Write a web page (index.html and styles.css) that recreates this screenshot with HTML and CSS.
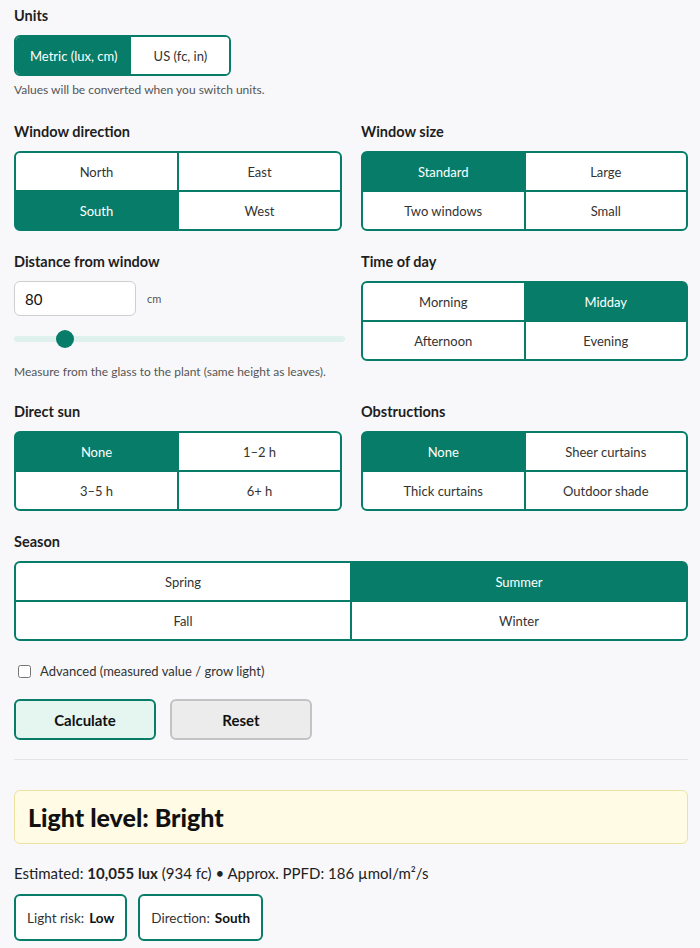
FILE: index.html
```html
<!DOCTYPE html>
<html>
<head>
  <meta charset="UTF-8">
  <title>Window Light Calculator</title>
  <link rel="stylesheet" href="styles.css">
</head>
<body>
  <div class="app">
    <div class="units">
      <div class="label">Units</div>
      <div class="seg">
        <button class="opt active">Metric (lux, cm)</button>
        <button class="opt">US (fc, in)</button>
      </div>
      <div class="hint">Values will be converted when you switch units.</div>
    </div>

    <div class="row">
      <div class="field">
        <div class="label">Window direction</div>
        <div class="grid">
          <button class="opt">North</button>
          <button class="opt">East</button>
          <button class="opt active">South</button>
          <button class="opt">West</button>
        </div>
      </div>
      <div class="field">
        <div class="label">Window size</div>
        <div class="grid">
          <button class="opt active">Standard</button>
          <button class="opt">Large</button>
          <button class="opt">Two windows</button>
          <button class="opt">Small</button>
        </div>
      </div>
    </div>

    <div class="row row-distance">
      <div class="field">
        <div class="label">Distance from window</div>
        <div class="distance">
          <input type="text" class="num" value="80">
          <span class="unit">cm</span>
        </div>
        <input type="range" class="slider" min="0" max="600" value="80">
        <div class="hint">Measure from the glass to the plant (same height as leaves).</div>
      </div>
      <div class="field">
        <div class="label">Time of day</div>
        <div class="grid">
          <button class="opt">Morning</button>
          <button class="opt active">Midday</button>
          <button class="opt">Afternoon</button>
          <button class="opt">Evening</button>
        </div>
      </div>
    </div>

    <div class="row">
      <div class="field">
        <div class="label">Direct sun</div>
        <div class="grid">
          <button class="opt active">None</button>
          <button class="opt">1–2 h</button>
          <button class="opt">3–5 h</button>
          <button class="opt">6+ h</button>
        </div>
      </div>
      <div class="field">
        <div class="label">Obstructions</div>
        <div class="grid">
          <button class="opt active">None</button>
          <button class="opt">Sheer curtains</button>
          <button class="opt">Thick curtains</button>
          <button class="opt">Outdoor shade</button>
        </div>
      </div>
    </div>

    <div class="field season">
      <div class="label">Season</div>
      <div class="grid">
        <button class="opt">Spring</button>
        <button class="opt active">Summer</button>
        <button class="opt">Fall</button>
        <button class="opt">Winter</button>
      </div>
    </div>

    <label class="check">
      <input type="checkbox">
      <span>Advanced (measured value / grow light)</span>
    </label>

    <div class="actions">
      <button class="btn primary">Calculate</button>
      <button class="btn">Reset</button>
    </div>

    <hr class="divider">

    <div class="result">
      <h2>Light level: Bright</h2>
    </div>
    <p class="estimate">Estimated: <strong>10,055 lux</strong> (934 fc) • Approx. PPFD: 186 µmol/m²/s</p>
    <div class="badges">
      <div class="badge">Light risk: <strong>Low</strong></div>
      <div class="badge">Direction: <strong>South</strong></div>
    </div>
  </div>
</body>
</html>
```
FILE: styles.css
```css
/* Base page */
body {
  font-family: Lato, "Open Sans", sans-serif;
  background-color: #f8f8fa;
  color: #222;
  margin: 0;
  padding: 0;
}

.app {
  padding: 6px 12px 20px 14px;
}

/* Labels and hints */
.label {
  font-size: 14.5px;
  font-weight: 700;
  line-height: 19px;
  margin-bottom: 10px;
  color: #1e1e1e;
}

.hint {
  font-size: 12px;
  line-height: 15px;
  color: #555;
  margin-top: 6px;
}

.units {
  margin-bottom: 25px;
}

/* Two column rows */
.row {
  display: grid;
  grid-template-columns: 328px 327px;
  column-gap: 19px;
  margin-bottom: 21px;
}

.row-distance {
  margin-bottom: 23px;
}

/* Option buttons */
.opt {
  font-family: inherit;
  font-size: 13px;
  color: #333;
  background-color: #fff;
  border: none;
  margin: 0;
  padding: 0;
  cursor: pointer;
}

.opt.active {
  background-color: #077d69;
  color: #fff;
}

.seg {
  display: inline-flex;
  border: 2px solid #077d69;
  border-radius: 6px;
  overflow: hidden;
  height: 37px;
}

.seg .opt {
  padding: 0 14px;
  min-width: 98px;
}

.grid {
  display: grid;
  grid-template-columns: 1fr 1fr;
  grid-auto-rows: 37px;
  gap: 2px;
  background-color: #077d69;
  border: 2px solid #077d69;
  border-radius: 6px;
  overflow: hidden;
}

/* Distance input */
.distance {
  display: flex;
  align-items: center;
  gap: 11px;
}

.num {
  width: 110px;
  height: 33px;
  padding: 0 0 0 10px;
  border: 1px solid #cfcfcf;
  border-radius: 6px;
  font-family: inherit;
  font-size: 15px;
  color: #111;
  background-color: #fff;
}

.unit {
  font-size: 11px;
  color: #555;
}

.slider {
  -webkit-appearance: none;
  appearance: none;
  display: block;
  width: 331px;
  height: 18px;
  margin: 14px 0 16px 0;
  background: transparent;
}

.slider::-webkit-slider-runnable-track {
  height: 6px;
  background-color: #dff1ec;
  border-radius: 3px;
}

.slider::-webkit-slider-thumb {
  -webkit-appearance: none;
  width: 18px;
  height: 18px;
  margin-top: -6px;
  border-radius: 50%;
  background-color: #077d69;
}

/* Season */
.season {
  margin-bottom: 22px;
}

/* Checkbox */
.check {
  display: flex;
  align-items: center;
  font-size: 13px;
  color: #333;
}

.check input {
  margin: 0 9px 0 4px;
  width: 13px;
  height: 13px;
}

/* Action buttons */
.actions {
  display: flex;
  gap: 14px;
  margin-top: 20px;
}

.btn {
  width: 142px;
  height: 41px;
  font-family: inherit;
  font-size: 15px;
  font-weight: 700;
  color: #111;
  background-color: #ececec;
  border: 2px solid #c3c3c3;
  border-radius: 6px;
  cursor: pointer;
}

.btn.primary {
  background-color: #e5f6f1;
  border-color: #077d69;
}

.divider {
  border: none;
  border-top: 1px solid #e3e3e3;
  margin: 19px 0 30px 0;
}

/* Result */
.result {
  background-color: #fffbe4;
  border: 1px solid #ece3a2;
  border-radius: 6px;
  height: 52px;
  display: flex;
  align-items: center;
  padding-left: 13px;
}

.result h2 {
  margin: 0;
  font-size: 25px;
  font-weight: 900;
  color: #111;
}

.estimate {
  font-size: 15px;
  margin: 20px 0 12px 0;
  color: #222;
}

.badges {
  display: flex;
  gap: 11px;
}

.badge {
  height: 43px;
  display: flex;
  align-items: center;
  gap: 5px;
  padding: 0 11px;
  font-size: 13.5px;
  color: #333;
  background-color: #fff;
  border: 2px solid #077d69;
  border-radius: 6px;
}

.badge strong {
  color: #111;
}
```
